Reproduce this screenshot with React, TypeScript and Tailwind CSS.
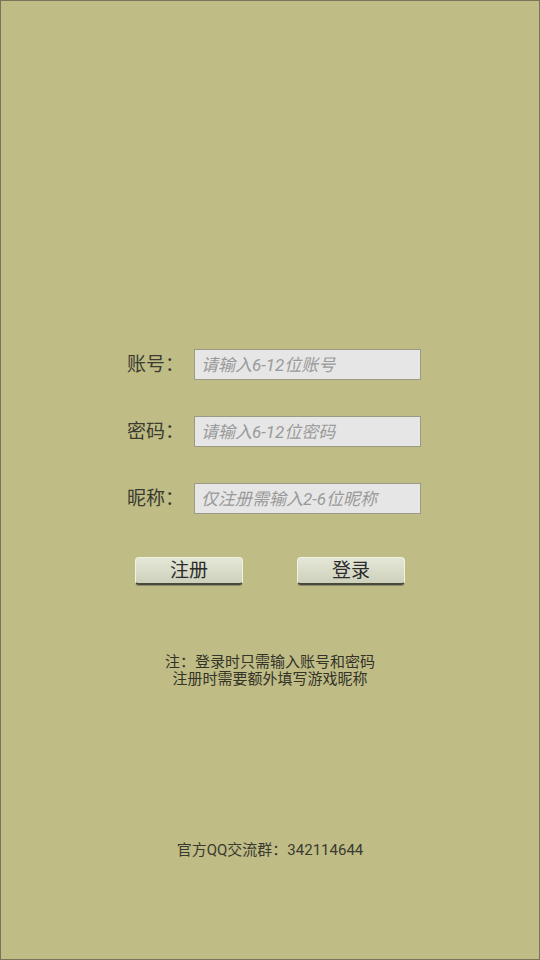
import React from 'react';

const font = { fontFamily: '"Roboto", "Noto Sans CJK SC", sans-serif' };

function Field({ label, placeholder }: { label: string; placeholder: string }) {
  return (
    <div className="flex items-center h-[31px]">
      <span className="w-[74px] pl-[7px] text-[19px] text-[#3b3b30] leading-none">{label}</span>
      <input
        className="w-[227px] h-[31px] bg-[#e6e6e6] border border-[#9b9a86] px-[6px] text-[17px] italic text-[#555] placeholder:text-[#9a9a9a] outline-none"
        placeholder={placeholder}
        style={font}
      />
    </div>
  );
}

function Btn({ text }: { text: string }) {
  return (
    <button
      className="w-[108px] h-[28px] rounded-[4px] border border-[#f0f2e0] border-b-[2px] border-b-[#4a4a3a] bg-gradient-to-b from-[#e4e7d6] to-[#cdd1bc] text-[19px] text-[#2c2c2c] leading-none shadow-[0_1px_0_#8a8a70]"
      style={font}
    >
      {text}
    </button>
  );
}

export default function App() {
  return (
    <div
      className="w-[540px] h-[960px] bg-[#bfbc86] border border-[#77765a] flex flex-col items-center"
      style={font}
    >
      <div className="h-[348px]" />
      <div className="flex flex-col gap-[36px] ml-[1px] w-[301px]">
        <Field label="账号：" placeholder="请输入6-12位账号" />
        <Field label="密码：" placeholder="请输入6-12位密码" />
        <Field label="昵称：" placeholder="仅注册需输入2-6位昵称" />
      </div>
      <div className="mt-[43px] w-[270px] ml-[0px] flex justify-between">
        <Btn text="注册" />
        <Btn text="登录" />
      </div>
      <div className="mt-[69px] flex flex-col items-center text-[15px] leading-[17px] text-[#333328]">
        <span>注：登录时只需输入账号和密码</span>
        <span>注册时需要额外填写游戏昵称</span>
      </div>
      <div className="mt-[151px] text-[15px] text-[#3a3a30]">官方QQ交流群：342114644</div>
    </div>
  );
}
